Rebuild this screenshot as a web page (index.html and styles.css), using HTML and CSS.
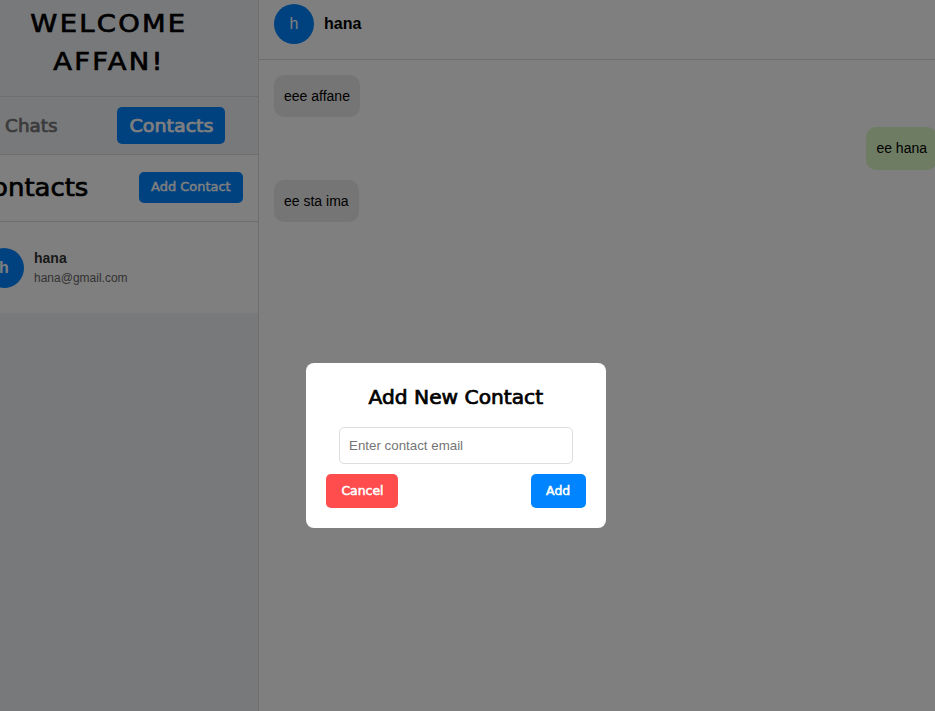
FILE: index.html
```html
<!DOCTYPE html>
<html lang="en">
<head>
<meta charset="utf-8">
<title>Chat</title>
<link rel="stylesheet" href="styles.css">
</head>
<body>
<div class="app">
  <aside class="sidebar">
    <h1 class="welcome"><span class="wide">WELCOME<br>AFFAN!</span></h1>
    <nav class="tabs">
      <button class="tab"><span class="wide">Chats</span></button>
      <button class="tab active"><span class="wide">Contacts</span></button>
    </nav>
    <div class="contacts-head">
      <h2><span class="wide">Contacts</span></h2>
      <button class="add-contact"><span class="wide">Add Contact</span></button>
    </div>
    <div class="contact-list">
      <div class="contact">
        <div class="avatar bold">h</div>
        <div>
          <div class="name">hana</div>
          <div class="email">hana@gmail.com</div>
        </div>
      </div>
    </div>
  </aside>
  <main class="chat">
    <header class="chat-head"><div class="avatar">h</div><strong>hana</strong></header>
    <div class="messages">
      <div class="message">eee affane</div>
      <div class="message sent">ee hana</div>
      <div class="message">ee sta ima</div>
    </div>
  </main>
  <div class="overlay">
    <div class="modal">
      <h3><span class="wide">Add New Contact</span></h3>
      <input type="email" placeholder="Enter contact email">
      <div class="actions">
        <button class="cancel"><span class="wide">Cancel</span></button>
        <button class="add"><span class="wide">Add</span></button>
      </div>
    </div>
  </div>
</div>
</body>
</html>
```
FILE: styles.css
```css
* { box-sizing: border-box; }
html, body { margin: 0; height: 100%; overflow: hidden; }
body { font-family: "Liberation Sans", Arial, sans-serif; }
h1, h2, h3 { margin: 0; font-weight: 400; }
button { border: 0; padding: 0; border-radius: 5px; background: #0084ff; color: #fff; }
h1, h2, h3, button { font-family: "DejaVu Sans", sans-serif; -webkit-text-stroke: 0.7px currentColor; }
.wide { display: inline-block; transform: scaleX(1.08); white-space: nowrap; }

.app { position: relative; display: flex; width: 994px; height: 913px; margin: -11px 0 0 -41px; background: #fff; }

.sidebar { flex: none; width: 300px; background: #f0f2f5; border-right: 1px solid #ddd; }
.welcome { height: 108px; padding: 16px 0 14px; border-bottom: 1px solid #ddd; text-align: center; font-size: 24px; line-height: 38.4px; letter-spacing: 2px; }
.welcome .wide { transform: scaleX(1.14); }
.tabs { display: flex; justify-content: space-between; align-items: center; height: 58px; padding: 0 33px 0 18px; border-bottom: 1px solid #ddd; }
.tab { width: 108px; height: 37px; font-size: 17px; background: none; color: #777; }
.tab.active { background: #0084ff; color: #fff; }
.tab.active .wide { transform: scaleX(1.12); }
.contacts-head { display: flex; justify-content: space-between; align-items: center; height: 67px; padding: 0 15px; background: #fff; border-bottom: 1px solid #ddd; }
h2 { font-size: 24px; }
h2 .wide { transform-origin: left; }
.add-contact { width: 104px; height: 31px; margin-bottom: 2px; font-size: 12px; -webkit-text-stroke-width: 0.4px; }
.contact-list { height: 91px; padding: 15px; background: #fff; }
.contact { display: flex; align-items: center; gap: 10px; height: 61px; padding-left: 10px; }
.name { font-size: 14px; font-weight: 700; color: #333; line-height: 20px; }
.email { font-size: 12px; color: #666; line-height: 20px; }
.avatar { flex: none; display: flex; align-items: center; justify-content: center; width: 40px; height: 40px; border-radius: 50%; background: #0084ff; color: #fff; font-size: 16px; }
.bold { font-weight: 700; }

.chat { flex: 1; }
.chat-head { display: flex; align-items: center; gap: 10px; height: 71px; padding: 0 15px; border-bottom: 1px solid #ddd; font-size: 16px; }
.messages { display: flex; flex-direction: column; align-items: flex-start; gap: 10px; padding: 15px 16px 15px 15px; }
.message { height: 42.4px; padding: 10px; border-radius: 10px; background: #eaeaea; font-size: 14px; line-height: 22.4px; }
.sent { align-self: flex-end; background: #dcf8c6; }

.overlay { position: absolute; inset: 0; display: flex; align-items: center; justify-content: center; background: rgba(0, 0, 0, 0.5); }
.modal { width: 300px; height: 165px; padding: 20px; border-radius: 8px; background: #fff; text-align: center; }
h3 { height: 44px; font-size: 18.72px; line-height: 30px; }
input { display: block; width: 234px; height: 37px; margin: 0 auto 10px; padding: 0 9px; border: 1px solid #ddd; border-radius: 5px; font-family: "Liberation Sans", Arial, sans-serif; font-size: 13.33px; }
.actions { display: flex; justify-content: space-between; }
.actions button { height: 34px; font-size: 11.5px; -webkit-text-stroke-width: 0.5px; }
.cancel { width: 72px; background: #ff4d4d; }
.add { width: 55px; }
```
